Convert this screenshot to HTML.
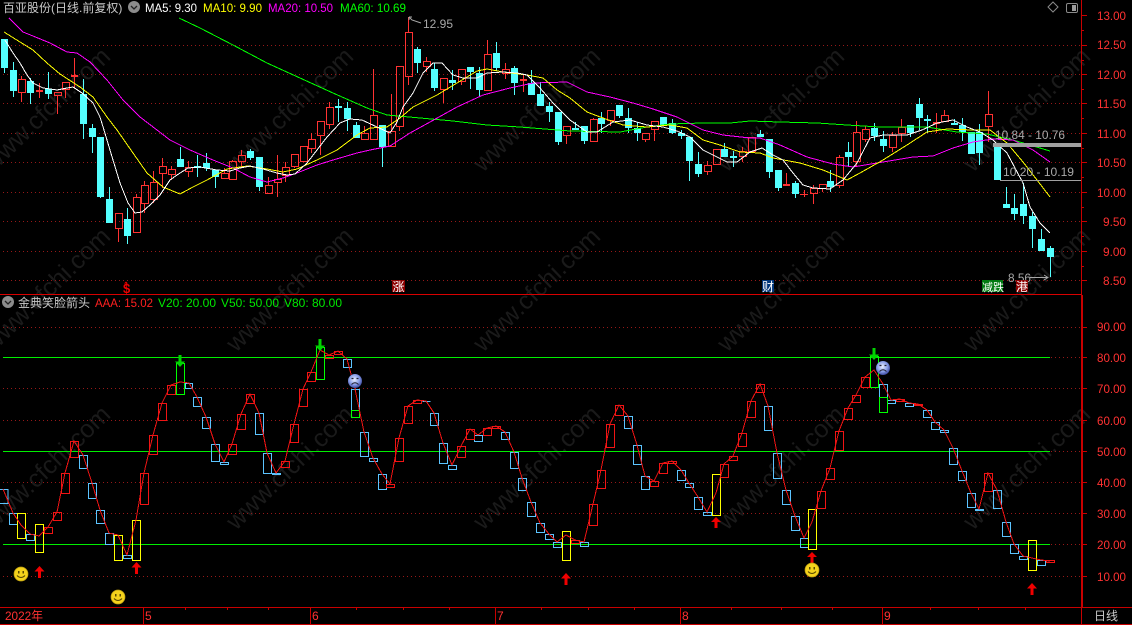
<!DOCTYPE html>
<html><head><meta charset="utf-8"><title>百亚股份</title>
<style>
html,body{margin:0;padding:0;background:#000;width:1132px;height:625px;overflow:hidden}
svg{display:block;position:absolute;left:0;top:0}
text{font-family:"Liberation Sans","Noto Sans CJK SC",sans-serif;font-size:12px}
.wm text{font-size:25px;fill:#1a1a1a}
.ax text{fill:#ff3232;text-anchor:end}
</style></head><body>
<svg width="1132" height="625" viewBox="0 0 1132 625" xmlns="http://www.w3.org/2000/svg">
<rect width="1132" height="625" fill="#000"/>
<g class="wm">
<text transform="translate(-7 173) rotate(-44)">www.cfchi.com</text>
<text transform="translate(236 173) rotate(-44)">www.cfchi.com</text>
<text transform="translate(483 173) rotate(-44)">www.cfchi.com</text>
<text transform="translate(727 173) rotate(-44)">www.cfchi.com</text>
<text transform="translate(973 173) rotate(-44)">www.cfchi.com</text>
<text transform="translate(-7 353) rotate(-44)">www.cfchi.com</text>
<text transform="translate(236 353) rotate(-44)">www.cfchi.com</text>
<text transform="translate(483 353) rotate(-44)">www.cfchi.com</text>
<text transform="translate(727 353) rotate(-44)">www.cfchi.com</text>
<text transform="translate(973 353) rotate(-44)">www.cfchi.com</text>
<text transform="translate(-7 531) rotate(-44)">www.cfchi.com</text>
<text transform="translate(236 531) rotate(-44)">www.cfchi.com</text>
<text transform="translate(483 531) rotate(-44)">www.cfchi.com</text>
<text transform="translate(727 531) rotate(-44)">www.cfchi.com</text>
<text transform="translate(973 531) rotate(-44)">www.cfchi.com</text>
</g>
<g shape-rendering="crispEdges">
<path stroke="#961818" stroke-width="1" stroke-dasharray="1 3" fill="none" d="M3 45.5H1081M3 74.5H1081M3 103.5H1081M3 133.5H1081M3 162.5H1081M3 192.5H1081M3 221.5H1081M3 251.5H1081M3 280.5H1081M3 327.5H1081M3 357.5H1081M3 388.5H1081M3 420.5H1081M3 451.5H1081M3 482.5H1081M3 513.5H1081M3 544.5H1081M3 576.5H1081"/>
<path fill="none" stroke="#ff3232" d="M21.5 76V79M21.5 92V102M57.5 95V114M65.5 89V98M118.5 228V242M136.5 194V197M144.5 181V185M144.5 203V213M153.5 171V182M153.5 199V203M162.5 158V166M162.5 173V188M171.5 166V169M171.5 174V180M188.5 161V167M188.5 171V177M224.5 168V173M232.5 160V161M232.5 179V180M241.5 150V155M241.5 161V167M268.5 177V185M277.5 155V179M277.5 182V197M285.5 162V167M285.5 175V182M294.5 166V168M311.5 133V139M311.5 148V153M320.5 135V155M329.5 102V107M329.5 124V129M364.5 126V133M373.5 69V115M391.5 94V131M399.5 126V131M408.5 17V32M408.5 76V85M426.5 57V61M426.5 66V72M443.5 89V103M461.5 81V85M487.5 40V54M505.5 63V69M505.5 73V79M566.5 135V144M593.5 118V119M610.5 120V126M645.5 139V142M654.5 129V141M707.5 161V165M707.5 171V175M742.5 147V151M742.5 156V162M813.5 185V188M813.5 193V204M822.5 188V192M839.5 155V157M839.5 185V188M856.5 121V132M856.5 161V166M865.5 126V129M865.5 139V142M892.5 132V135M892.5 147V152M901.5 119V127M901.5 133V142M944.5 110V115M988.5 91V114M988.5 126V142M39.5 83V98M74.5 58V88M523.5 75V92M786.5 173V186M936.5 113V133M804.5 190V197"/>
<path fill="none" stroke="#ff3232" d="M18.5 79.5h7v13h-7zM54.5 92.5h7v3h-7zM62.5 82.5h7v7h-7zM115.5 213.5h7v15h-7zM133.5 197.5h7v35h-7zM141.5 185.5h7v18h-7zM150.5 182.5h7v17h-7zM159.5 166.5h7v7h-7zM168.5 169.5h7v5h-7zM185.5 167.5h7v4h-7zM221.5 173.5h7v5h-7zM229.5 161.5h7v18h-7zM238.5 155.5h7v6h-7zM265.5 185.5h7v8h-7zM274.5 179.5h7v3h-7zM282.5 167.5h7v8h-7zM291.5 154.5h7v12h-7zM300.5 146.5h7v15h-7zM308.5 139.5h7v9h-7zM317.5 121.5h7v14h-7zM326.5 107.5h7v17h-7zM361.5 133.5h7v6h-7zM370.5 115.5h7v24h-7zM388.5 131.5h7v15h-7zM396.5 66.5h7v60h-7zM405.5 32.5h7v44h-7zM423.5 61.5h7v5h-7zM440.5 78.5h7v11h-7zM458.5 69.5h7v12h-7zM484.5 54.5h7v36h-7zM502.5 69.5h7v4h-7zM563.5 126.5h7v9h-7zM590.5 119.5h7v22h-7zM607.5 110.5h7v10h-7zM642.5 133.5h7v6h-7zM651.5 121.5h7v8h-7zM704.5 165.5h7v6h-7zM713.5 149.5h7v15h-7zM739.5 151.5h7v5h-7zM748.5 137.5h7v14h-7zM810.5 188.5h7v5h-7zM819.5 184.5h7v4h-7zM836.5 157.5h7v28h-7zM853.5 132.5h7v29h-7zM862.5 129.5h7v10h-7zM889.5 135.5h7v12h-7zM898.5 127.5h7v6h-7zM941.5 115.5h7v6h-7zM985.5 114.5h7v12h-7z"/>
<path fill="#ff3232" d="M36 90h7v2h-7zM71 75h7v2h-7zM520 79h7v2h-7zM783 184h7v2h-7zM933 122h7v2h-7zM800 194h8v1h-8z"/>
<path fill="none" stroke="#54ffff" d="M4.5 68V73M13.5 62V70M13.5 91V97M30.5 78V81M30.5 93V104M48.5 72V89M48.5 94V99M83.5 79V94M83.5 124V139M92.5 124V128M92.5 137V153M100.5 197V198M109.5 187V199M127.5 208V219M127.5 236V244M180.5 147V159M197.5 155V166M197.5 168V177M206.5 153V163M206.5 168V171M215.5 177V188M250.5 149V151M250.5 158V160M259.5 187V191M338.5 99V122M347.5 102V108M347.5 119V131M356.5 122V125M382.5 147V167M417.5 47V49M417.5 63V73M434.5 63V69M434.5 88V91M452.5 70V90M470.5 72V89M479.5 67V73M479.5 90V97M496.5 42V53M496.5 68V71M514.5 66V68M514.5 83V95M531.5 70V83M540.5 82V94M549.5 102V106M549.5 112V122M558.5 142V145M575.5 122V130M584.5 141V144M601.5 112V118M601.5 124V133M619.5 116V118M628.5 108V118M628.5 128V133M637.5 122V128M637.5 133V141M672.5 119V123M672.5 133V134M681.5 130V139M689.5 161V181M698.5 152V164M698.5 174V177M724.5 143V149M733.5 151V167M760.5 130V134M769.5 172V178M778.5 188V191M795.5 181V198M830.5 170V181M830.5 187V192M848.5 142V152M848.5 157V166M874.5 123V128M874.5 136V141M883.5 131V139M883.5 146V152M910.5 133V137M919.5 98V104M919.5 118V130M927.5 115V133M954.5 119V123M962.5 118V125M962.5 132V141M979.5 124V132M979.5 153V165M1006.5 187V204M1014.5 194V208M1014.5 214V220M1023.5 183V204M1023.5 216V224M1032.5 212V216M1032.5 229V248M1041.5 229V239M1050.5 246V248M1050.5 257V277"/>
<path fill="#54ffff" d="M1 39h7v29h-7zM10 70h7v21h-7zM27 81h7v12h-7zM45 89h7v5h-7zM80 94h7v30h-7zM89 128h7v9h-7zM97 137h7v60h-7zM106 199h7v24h-7zM124 219h7v17h-7zM177 159h7v8h-7zM194 166h7v2h-7zM203 163h7v5h-7zM212 170h7v7h-7zM247 151h7v7h-7zM256 157h7v30h-7zM335 106h7v2h-7zM344 108h7v11h-7zM353 125h7v13h-7zM379 125h7v22h-7zM414 49h7v14h-7zM431 69h7v19h-7zM449 80h7v3h-7zM467 67h7v5h-7zM476 73h7v17h-7zM493 53h7v15h-7zM511 68h7v15h-7zM528 83h7v12h-7zM537 94h7v12h-7zM546 106h7v6h-7zM555 112h7v30h-7zM572 128h7v2h-7zM581 126h7v15h-7zM598 118h7v6h-7zM616 105h7v11h-7zM625 118h7v10h-7zM634 128h7v5h-7zM660 117h7v8h-7zM669 123h7v10h-7zM678 133h7v3h-7zM686 137h7v24h-7zM695 164h7v10h-7zM721 149h7v8h-7zM730 156h7v2h-7zM757 134h7v3h-7zM766 139h7v33h-7zM775 170h7v18h-7zM792 183h7v11h-7zM827 181h7v6h-7zM845 152h7v5h-7zM871 128h7v8h-7zM880 139h7v7h-7zM907 125h7v8h-7zM916 104h7v14h-7zM924 119h7v2h-7zM951 123h7v2h-7zM959 125h7v7h-7zM968 132h7v22h-7zM976 132h7v21h-7zM994 147h7v33h-7zM1003 204h7v4h-7zM1011 208h7v6h-7zM1020 204h7v12h-7zM1029 216h7v13h-7zM1038 239h7v12h-7zM1047 248h7v9h-7z"/>
</g>
<g fill="none" stroke-width="1" shape-rendering="crispEdges">
<polyline stroke="#00ff00" points="179,18 200,28 233,45 267,63 300,78 333,93 367,108 387,115 420,118 453,121 487,125 520,127 570,131 620,132 647,127 670,124 703,123 730,123 750,121 780,122 817,123 847,125 880,127 927,127 957,132 987,134 1013,140 1050,151"/>
<polyline stroke="#ff00ff" points="9,18 23,32 33,36 50,43 67,52 77,53 90,62 107,80 123,100 140,117 157,130 170,140 190,150 213,160 233,168 250,177 267,182 283,178 297,173 317,165 333,160 357,153 370,150 390,146 410,133 430,122 457,107 483,95 510,88 533,83 567,82 587,92 610,97 633,103 653,109 677,117 703,130 723,135 750,138 760,138 780,145 807,157 833,164 853,167 883,162 913,157 933,156 953,148 973,142 993,139 1013,140 1033,150 1050,162"/>
<polyline stroke="#ffff00" points="4,32 20,42 33,50 47,63 60,74 80,87 93,97 107,117 117,130 133,153 147,173 163,187 180,194 193,187 207,180 227,169 247,166 267,169 283,172 297,169 317,160 337,150 357,135 370,128 387,127 400,118 413,107 437,95 457,83 477,71 487,69 503,72 527,75 543,78 557,90 570,98 587,112 603,118 623,125 647,127 670,125 687,128 703,140 720,145 740,152 760,153 773,158 800,163 823,170 847,180 860,173 883,160 907,145 927,132 947,129 973,130 990,130 1007,143 1023,162 1037,180 1050,197"/>
<polyline stroke="#ffffff" points="5,40 13,53 20,63 27,75 33,83 43,88 57,90 67,88 73,87 82,93 93,103 100,117 104,130 113,160 120,183 128,203 135,213 142,212 150,205 160,195 170,180 177,175 188,168 200,167 217,170 230,171 240,168 250,166 263,169 277,173 287,175 295,174 307,163 317,150 327,137 340,123 350,119 362,120 377,127 390,133 397,122 403,107 413,93 423,73 433,63 442,63 453,75 463,78 477,78 487,73 503,72 517,73 527,75 540,88 553,103 570,120 587,132 597,132 613,122 630,120 647,125 663,127 677,131 690,137 703,150 717,157 727,162 737,162 750,152 762,148 773,155 783,160 793,173 803,185 813,188 830,189 843,180 857,163 870,138 883,135 907,135 922,130 937,123 953,120 967,127 980,132 993,140 1007,153 1023,183 1030,207 1040,223 1050,233"/>
</g>
<g shape-rendering="crispEdges">
<rect x="993" y="143" width="88" height="4" fill="#a0a0a0"/>
<rect x="1000" y="180" width="81" height="1" fill="#a0a0a0"/>
<path stroke="#00ee00" d="M3 357.5H1050M3 451.5H1050M3 544.5H1050"/>
<path fill="none" stroke="#5cc4ff" d="M-1 489.5h9v14h-9zM9.500 513.500h8v11h-8zM26.500 534.500h8v6h-8zM79.500 455.500h8v13h-8zM88.500 483.500h8v15h-8zM96.500 510.500h8v13h-8zM105.500 533.500h8v11h-8zM123.500 555.500h8v3h-8zM185.500 383.500h7v5h-7zM193.500 397.500h8v9h-8zM202.500 417.500h8v11h-8zM211.500 444.500h8v17h-8zM220.500 462.500h8v2h-8zM255.500 413.500h8v21h-8zM263.500 453.500h8v20h-8zM272.500 473.500h8v1h-8zM343.500 359.500h8v8h-8zM351.500 389.500h8v28h-8zM360.500 432.500h8v24h-8zM369.500 458.500h8v3h-8zM378.500 474.500h8v15h-8zM422.500 401.500h8M430.500 413.500h8v12h-8zM439.500 443.500h8v20h-8zM448.500 465.500h8v4h-8zM474.500 435.500h8v6h-8zM501.500 432.500h8v7h-8zM510.500 452.500h8v16h-8zM518.500 478.500h8v12h-8zM527.500 502.500h8v14h-8zM536.500 523.500h8v9h-8zM545.500 534.500h8v5h-8zM553.500 542.500h8v5h-8zM580.500 542.500h8v4h-8zM624.500 416.500h8v12h-8zM633.500 445.500h8v19h-8zM641.500 476.500h8v13h-8zM677.500 470.500h8v10h-8zM685.500 483.500h8v4h-8zM694.500 497.500h8v12h-8zM703.500 512.500h8v3h-8zM764.500 406.500h8v24h-8zM773.500 453.500h8v25h-8zM782.500 490.500h8v14h-8zM791.500 516.500h8v14h-8zM800.500 538.500h8v9h-8zM879.500 384.500h8v13h-8zM887.500 400.500h8v3h-8zM905.500 403.500h8v3h-8zM923.500 410.500h8v7h-8zM931.500 422.500h8v7h-8zM940.500 430.500h8v2h-8zM949.500 448.500h8v16h-8zM958.500 471.500h8v9h-8zM967.500 493.500h8v14h-8zM975.500 509.500h8v1h-8zM993.500 490.500h8v18h-8zM1002.500 522.500h8v14h-8zM1010.500 544.500h8v9h-8zM1019.500 556.500h8v3h-8zM1037.500 560.500h8v5h-8z"/>
<path fill="none" stroke="#f01414" d="M44.500 527.500h8v6h-8zM53.500 512.500h8v8h-8zM61.500 473.500h8v20h-8zM70.500 441.500h8v16h-8zM140.500 473.500h8v31h-8zM149.500 435.500h8v19h-8zM158.500 403.500h8v17h-8zM167.500 385.500h8v9h-8zM228.500 444.500h8v10h-8zM237.500 414.500h8v15h-8zM246.500 394.500h8v9h-8zM281.500 461.500h8v6h-8zM290.500 424.500h8v18h-8zM299.500 389.500h8v17h-8zM307.500 372.500h8v9h-8zM325.500 355.500h8v3h-8zM334.500 351.500h8v3h-8zM386.500 484.500h8v3h-8zM395.500 438.500h8v23h-8zM404.500 406.500h8v17h-8zM413.500 400.500h8v3h-8zM457.500 446.500h8v11h-8zM466.500 429.500h8v10h-8zM483.500 428.500h8v7h-8zM492.500 426.500h8v2h-8zM571.500 540.500h8v3h-8zM589.500 504.500h8v21h-8zM597.500 470.500h8v18h-8zM606.500 424.500h8v23h-8zM615.500 405.500h8v10h-8zM650.500 481.500h8v5h-8zM659.500 463.500h8v10h-8zM668.500 461.500h8v2h-8zM720.500 464.500h8v13h-8zM729.500 456.500h8v4h-8zM738.500 433.500h8v13h-8zM747.500 401.500h8v16h-8zM756.500 384.500h8v8h-8zM817.500 491.500h8v17h-8zM826.500 468.500h8v11h-8zM835.500 431.500h8v19h-8zM844.500 408.500h8v11h-8zM852.500 395.500h8v7h-8zM861.500 377.500h8v10h-8zM896.500 399.500h8v2h-8zM914.500 404.500h8v1h-8zM984.500 473.500h8v18h-8zM1046.500 560.500h8v2h-8z"/>
<path fill="none" stroke="#ffff00" d="M17.500 513.500h8v25h-8zM35.500 524.500h8v28h-8zM114.500 535.500h8v25h-8zM132.500 520.500h8v40h-8zM562.500 531.500h8v29h-8zM712.500 474.500h8v41h-8zM808.500 509.500h8v40h-8zM1028.500 540.500h8v30h-8z"/>
<path fill="none" stroke="#00ff00" d="M176.500 363.500h8v31h-8zM316.500 347.500h8v32h-8zM351.500 410.500h8v7h-8zM870.500 356.500h8v31h-8zM879.500 397.500h8v15h-8z"/>
</g>
<polyline fill="none" stroke="#f01414" stroke-width="1" shape-rendering="crispEdges" points="3,489 13,513 21,525 30,534 39,536 48,527 57,512 65,473 74,441 83,455 92,483 100,510 109,533 118,535 127,555 136,520 144,473 153,435 162,403 171,385 180,382 189,383 197,397 206,417 215,444 224,462 232,444 241,414 250,394 259,413 267,453 276,473 285,461 294,424 303,389 311,372 320,350 329,355 338,351 347,359 355,389 364,432 373,458 382,474 390,484 399,438 408,406 417,400 426,401 434,413 443,443 452,465 461,446 470,429 478,435 487,428 496,426 505,432 514,452 522,478 531,502 540,523 549,534 557,542 566,535 575,540 584,542 593,504 601,470 610,424 619,405 628,416 637,445 645,476 654,481 663,463 672,461 681,470 689,483 698,497 707,512 716,493 724,464 733,456 742,433 751,401 760,384 768,406 777,453 786,490 795,516 804,538 812,522 821,491 830,468 839,431 848,408 856,395 865,377 874,370 883,384 891,400 900,399 909,403 918,404 927,410 935,422 944,430 953,448 962,471 971,493 979,509 988,473 997,490 1006,522 1014,544 1023,556 1032,558 1041,560 1050,561"/>
<g fill="#f00000">
<path d="M34.500 571.500L39.500 566L44.500 571.500H41V578H38V571.500z"/>
<path d="M131.500 567.500L136.500 562L141.500 567.500H138V574H135V567.500z"/>
<path d="M561 578.500L566 573L571 578.500H567.500V585H564.500V578.500z"/>
<path d="M711 522L716 517L721 522H717.500V528H714.500V522z"/>
<path d="M807 557L812 552L817 557H813.500V563H810.500V557z"/>
<path d="M1027 588.500L1032 583L1037 588.500H1033.500V595H1030.500V588.500z"/>
</g>
<g fill="#00d400">
<path d="M175 361.500L180 367L185 361.500H181.500V355H178.500V361.500z"/>
<path d="M315 345.500L320 351L325 345.500H321.500V339H318.500V345.500z"/>
<path d="M869 354.500L874 360L879 354.500H875.500V348H872.500V354.500z"/>
</g>
<defs>
<radialGradient id="f" cx="45%" cy="40%" r="60%"><stop offset="0" stop-color="#e8eeff"/><stop offset=".6" stop-color="#8a9ee8"/><stop offset="1" stop-color="#3c4aa0"/></radialGradient>
<g id="s"><circle r="7" fill="#f4d21c" stroke="#b89a10" stroke-width=".7"/><rect x="-3" y="-3" width="1.500" height="2.500" fill="#5a4a00"/><rect x="1.500" y="-3" width="1.500" height="2.500" fill="#5a4a00"/><path d="M-4 1.500Q0 5.500 4 1.500" fill="none" stroke="#5a4a00" stroke-width="1"/></g>
<g id="d"><circle r="7" fill="url(#f)"/><path d="M-3.500 -2.500h2M1.500 -2.500h2" stroke="#223" stroke-width="1.300"/><path d="M-3.500 3.500Q0 0 3.500 3.500" fill="none" stroke="#223" stroke-width="1"/></g>
</defs>
<use href="#s" x="21" y="574"/><use href="#s" x="118" y="597"/><use href="#s" x="812" y="570"/>
<use href="#d" x="355" y="381"/><use href="#d" x="883" y="368"/>
<g shape-rendering="crispEdges">
<rect x="0" y="294" width="1081" height="1" fill="#d80000"/>
<rect x="1081" y="0" width="1" height="625" fill="#c80000"/>
<rect x="1082" y="295" width="1" height="313" fill="#c80000"/>
<rect x="0" y="607" width="1132" height="1" fill="#c80000"/>
<rect x="0" y="624" width="1132" height="1" fill="#c80000"/>
<path stroke="#c80000" d="M143.500 608V624M310.500 608V624M495.500 608V624M680.500 608V624M882.500 608V624M185.500 608V610M227.500 608V610M268.500 608V610M356.500 608V610M403.500 608V610M449.500 608V610M541.500 608V610M588.500 608V610M634.500 608V610M731.500 608V610M781.500 608V610M832.500 608V610M930.500 608V610M978.500 608V610M1025.500 608V610"/>
<path stroke="#c80000" d="M1082 15.500h5M1082 45.500h5M1082 74.500h5M1082 103.500h5M1082 133.500h5M1082 162.500h5M1082 192.500h5M1082 221.500h5M1082 251.500h5M1082 280.500h5M1082 30.500h2M1082 60.500h2M1082 89.500h2M1082 118.500h2M1082 148.500h2M1082 177.500h2M1082 207.500h2M1082 236.500h2M1082 266.500h2M1083 327.500h4M1083 357.500h4M1083 388.500h4M1083 420.500h4M1083 451.500h4M1083 482.500h4M1083 513.500h4M1083 544.500h4M1083 576.500h4"/>
</g>
<text x="3" y="12" fill="#c8c8c8">百亚股份(日线.前复权)</text>
<circle cx="134" cy="7" r="6" fill="#8c8c8c"/><path d="M131 6l3 3 3-3" fill="none" stroke="#222" stroke-width="1.300"/>
<text x="145" y="12" fill="#fff" textLength="52" lengthAdjust="spacingAndGlyphs">MA5: 9.30</text>
<text x="203" y="12" fill="#ffff00" textLength="59" lengthAdjust="spacingAndGlyphs">MA10: 9.90</text>
<text x="268" y="12" fill="#ff00ff" textLength="65" lengthAdjust="spacingAndGlyphs">MA20: 10.50</text>
<text x="340" y="12" fill="#00ff00" textLength="66" lengthAdjust="spacingAndGlyphs">MA60: 10.69</text>
<path d="M1053 2l5 5-5 5-5-5z" fill="none" stroke="#8a8a8a"/>
<rect x="1066.500" y="3.500" width="11" height="9" rx="1.500" fill="none" stroke="#8a8a8a"/><rect x="1072" y="5" width="4" height="6" fill="#9a9a9a"/>
<circle cx="8" cy="302" r="6" fill="#8c8c8c"/><path d="M5 301l3 3 3-3" fill="none" stroke="#222" stroke-width="1.300"/>
<text x="18" y="307" fill="#c8c8c8">金典笑脸箭头</text>
<text x="95" y="307" fill="#ff2020" textLength="58" lengthAdjust="spacingAndGlyphs">AAA: 15.02</text>
<text x="158" y="307" fill="#00e800" textLength="58" lengthAdjust="spacingAndGlyphs">V20: 20.00</text>
<text x="221" y="307" fill="#00e800" textLength="58" lengthAdjust="spacingAndGlyphs">V50: 50.00</text>
<text x="284" y="307" fill="#00e800" textLength="58" lengthAdjust="spacingAndGlyphs">V80: 80.00</text>
<g class="ax" lengthAdjust="spacingAndGlyphs">
<text x="1126" y="20" textLength="29" lengthAdjust="spacingAndGlyphs">13.00</text><text x="1126" y="49" textLength="29" lengthAdjust="spacingAndGlyphs">12.50</text><text x="1126" y="79" textLength="29" lengthAdjust="spacingAndGlyphs">12.00</text><text x="1126" y="108" textLength="29" lengthAdjust="spacingAndGlyphs">11.50</text><text x="1126" y="138" textLength="29" lengthAdjust="spacingAndGlyphs">11.00</text><text x="1126" y="167" textLength="29" lengthAdjust="spacingAndGlyphs">10.50</text><text x="1126" y="197" textLength="29" lengthAdjust="spacingAndGlyphs">10.00</text><text x="1126" y="226" textLength="23" lengthAdjust="spacingAndGlyphs">9.50</text><text x="1126" y="256" textLength="23" lengthAdjust="spacingAndGlyphs">9.00</text><text x="1126" y="285" textLength="23" lengthAdjust="spacingAndGlyphs">8.50</text>
<text x="1126" y="331" textLength="29" lengthAdjust="spacingAndGlyphs">90.00</text><text x="1126" y="362" textLength="29" lengthAdjust="spacingAndGlyphs">80.00</text><text x="1126" y="393" textLength="29" lengthAdjust="spacingAndGlyphs">70.00</text><text x="1126" y="425" textLength="29" lengthAdjust="spacingAndGlyphs">60.00</text><text x="1126" y="456" textLength="29" lengthAdjust="spacingAndGlyphs">50.00</text><text x="1126" y="487" textLength="29" lengthAdjust="spacingAndGlyphs">40.00</text><text x="1126" y="518" textLength="29" lengthAdjust="spacingAndGlyphs">30.00</text><text x="1126" y="549" textLength="29" lengthAdjust="spacingAndGlyphs">20.00</text><text x="1126" y="581" textLength="29" lengthAdjust="spacingAndGlyphs">10.00</text>
</g>
<text x="423" y="28" fill="#a8a8a8" textLength="30" lengthAdjust="spacingAndGlyphs">12.95</text>
<path d="M409 17l3 3 9 3M409 17h3M409 17v3" fill="none" stroke="#a8a8a8"/>
<text x="995" y="139" fill="#a8a8a8" textLength="70" lengthAdjust="spacingAndGlyphs">10.84 - 10.76</text>
<text x="1003" y="176" fill="#a8a8a8" textLength="71" lengthAdjust="spacingAndGlyphs">10.20 - 10.19</text>
<text x="1008" y="282" fill="#a8a8a8" textLength="23" lengthAdjust="spacingAndGlyphs">8.56</text>
<path d="M1030 277.500H1048M1044 275l4 2.500-4 2.500" fill="none" stroke="#a8a8a8"/>
<text x="123" y="293" fill="#f00000" font-weight="bold" style="font-size:13px">$</text>
<path d="M124 283.500l2-2 2 2z" fill="#f00000"/>
<rect x="392" y="280" width="13" height="12" fill="#8b0000"/><text x="392.500" y="291" fill="#fff">涨</text>
<rect x="762" y="280" width="12" height="12" fill="#00357a"/><text x="762" y="291" fill="#fff">财</text>
<rect x="982" y="280" width="21" height="12" fill="#007a10"/><text x="982" y="291" fill="#fff" style="font-size:11px">减跌</text>
<rect x="1016" y="280" width="12" height="12" fill="#8b0000"/><text x="1016" y="291" fill="#fff">港</text>
<text x="5" y="620" fill="#ff3232" textLength="38" lengthAdjust="spacingAndGlyphs">2022年</text>
<text x="145" y="620" fill="#ff3232">5</text><text x="312" y="620" fill="#ff3232">6</text><text x="497" y="620" fill="#ff3232">7</text><text x="682" y="620" fill="#ff3232">8</text><text x="884" y="620" fill="#ff3232">9</text>
<text x="1094" y="620" fill="#c8c8c8">日线</text>
</svg>
</body></html>
